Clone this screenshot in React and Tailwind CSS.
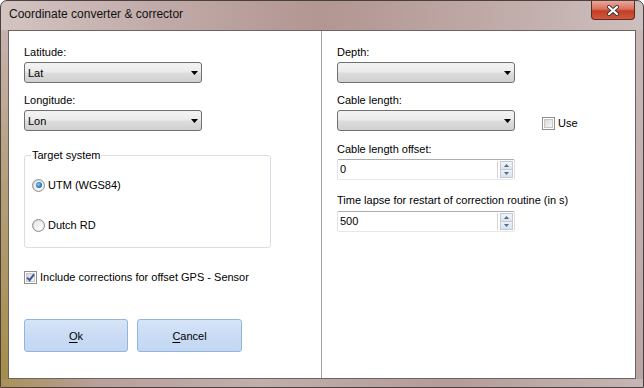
import React from 'react'

const font = "font-['Liberation_Sans','Segoe_UI',Arial,sans-serif]"

function Arrow() {
  return (
    <svg width="7" height="4" viewBox="0 0 7 4" className="shrink-0">
      <polygon points="0,0 7,0 3.5,4" fill="#000" />
    </svg>
  )
}

function Select({ value }) {
  return (
    <div className="flex h-[21px] w-[178px] items-center justify-between rounded-[3px] border border-[#707070] bg-[linear-gradient(180deg,#f3f3f3_0%,#ebebeb_48%,#dddddd_52%,#d0d0d0_100%)] pl-[3px] pr-[3px]">
      <span className="leading-[14px] text-black">{value}</span>
      <Arrow />
    </div>
  )
}

function SpinInput({ value }) {
  return (
    <div className="flex h-[21px] w-[178px] items-stretch rounded-[2px] border border-[#abadb3] border-b-[#e3e9ef] border-l-[#e2e3ea] border-r-[#dbdfe6] bg-white">
      <span className="flex-1 pl-[2px] leading-[19px] text-black">{value}</span>
      <div className="my-[1px] mr-[1px] flex w-[16px] border-l border-[#d4d4d4] pl-[2px]">
        <div className="flex w-[13px] flex-col">
          <div className="flex h-[9px] items-center justify-center border border-[#c3cad3] bg-[linear-gradient(180deg,#f2f5f8,#dde4ec)]">
            <svg width="5" height="3" viewBox="0 0 5 3">
              <polygon points="2.5,0 5,3 0,3" fill="#4e6a98" />
            </svg>
          </div>
          <div className="flex h-[9px] items-center justify-center border border-t-0 border-[#c3cad3] bg-[linear-gradient(180deg,#eef2f6,#dbe2ea)]">
            <svg width="5" height="3" viewBox="0 0 5 3">
              <polygon points="0,0 5,0 2.5,3" fill="#4e6a98" />
            </svg>
          </div>
        </div>
      </div>
    </div>
  )
}

function Radio({ checked }) {
  return (
    <div className="flex h-[13px] w-[13px] shrink-0 items-center justify-center rounded-full border border-[#8e8f8f] bg-[linear-gradient(135deg,#d2d2d2,#f6f6f6)]">
      <div className="flex h-[9px] w-[9px] items-center justify-center rounded-full bg-[linear-gradient(135deg,#e6e6e6,#ffffff)]">
        {checked && (
          <div className="h-[6px] w-[6px] rounded-full bg-[radial-gradient(circle_at_40%_40%,#8fd0f5_0%,#2b77c2_55%,#15508f_100%)]" />
        )}
      </div>
    </div>
  )
}

function Check({ checked }) {
  return (
    <div className="flex h-[13px] w-[13px] shrink-0 items-center justify-center border border-[#8e8f8f] bg-white">
      <div className="relative h-[9px] w-[9px] border border-[#c7c7c7] bg-[linear-gradient(135deg,#d9d9d9,#f7f7f7)]">
        {checked && (
          <svg width="11" height="11" viewBox="0 0 11 11" className="absolute -left-[2px] -top-[2px]">
            <path d="M2.2 5.6 L4.6 8.2 L9 2.4" stroke="#3d5a9e" strokeWidth="2" fill="none" />
          </svg>
        )}
      </div>
    </div>
  )
}

function Button({ first, rest, w }) {
  return (
    <button className={`h-[33px] ${w} rounded-[3px] border border-[#94b4dc] bg-[linear-gradient(180deg,#d6e5f8_0%,#cadcf4_50%,#c2d7f2_100%)] text-[11px] leading-[14px] text-black`}>
      <span className="underline underline-offset-[2px]">{first}</span>
      {rest}
    </button>
  )
}

export default function App() {
  return (
    <div className={`${font} flex h-[388px] w-[644px] flex-col overflow-hidden rounded-t-[7px] border border-[#4a4040] bg-[linear-gradient(90deg,#d3c4c2_0%,#c0aaa7_25%,#b29692_50%,#bea9a6_75%,#cdbfbe_100%)]`}>
      {/* title bar */}
      <div className="flex h-[29px] shrink-0 items-start justify-between">
        <div className="pl-[8px] pt-[6px] text-[12px] leading-[15px] text-[#111]">Coordinate converter &amp; corrector</div>
        <div className="mr-[8px] flex h-[19px] w-[44px] items-center justify-center rounded-b-[4px] border border-t-0 border-[#5b2a22] bg-[linear-gradient(180deg,#eba79a_0%,#d9705c_45%,#c23e26_55%,#d2583c_100%)]">
          <svg width="14" height="11" viewBox="0 0 14 11">
            <path d="M3 2 L11 9 M11 2 L3 9" stroke="#3a3a3a" strokeWidth="4" strokeLinecap="round" />
            <path d="M3 2 L11 9 M11 2 L3 9" stroke="#ffffff" strokeWidth="2.2" strokeLinecap="round" />
          </svg>
        </div>
      </div>

      <div className="flex h-[349px] shrink-0">
        <div className="w-[7px] bg-[linear-gradient(180deg,#c6b3ae_0%,#b6a07e_40%,#a48d48_100%)]" />

        {/* content */}
        <div className="flex w-[628px] border border-[#6e6262] bg-white text-[11px] text-black">
          {/* left column */}
          <div className="flex w-[312px] flex-col pl-[15px] pt-[14px]">
            <div className="leading-[14px]">Latitude:</div>
            <div className="mt-[3px]">
              <Select value="Lat" />
            </div>
            <div className="mt-[10px] leading-[14px]">Longitude:</div>
            <div className="mt-[3px]">
              <Select value="Lon" />
            </div>

            <fieldset className="mt-[17px] w-[247px] rounded-[3px] border border-[#d5dfe5] pb-[15px] pl-[7px]">
              <legend className="ml-[-1px] px-[1px] leading-[14px]">Target system</legend>
              <div className="mt-[16px] flex h-[14px] items-center gap-[3px]">
                <Radio checked />
                <span className="leading-[14px]">UTM (WGS84)</span>
              </div>
              <div className="mt-[26px] flex h-[14px] items-center gap-[3px]">
                <Radio />
                <span className="leading-[14px]">Dutch RD</span>
              </div>
            </fieldset>

            <div className="mt-[22px] flex h-[14px] items-center gap-[3px]">
              <Check checked />
              <span className="leading-[14px]">Include corrections for offset GPS - Sensor</span>
            </div>

            <div className="mt-[35px] flex gap-[9px]">
              <Button first="O" rest="k" w="w-[104px]" />
              <Button first="C" rest="ancel" w="w-[105px]" />
            </div>
          </div>

          <div className="w-px bg-[#a0a0a0]" />

          {/* right column */}
          <div className="flex flex-1 flex-col pl-[15px] pt-[14px]">
            <div className="leading-[14px]">Depth:</div>
            <div className="mt-[3px]">
              <Select value="" />
            </div>
            <div className="mt-[10px] leading-[14px]">Cable length:</div>
            <div className="mt-[3px] flex items-start">
              <Select value="" />
              <div className="ml-[27px] mt-[6px] flex h-[14px] items-center gap-[3px]">
                <Check />
                <span className="leading-[14px]">Use</span>
              </div>
            </div>
            <div className="mt-[11px] leading-[14px]">Cable length offset:</div>
            <div className="mt-[3px]">
              <SpinInput value="0" />
            </div>
            <div className="mt-[13px] leading-[14px]">Time lapse for restart of correction routine (in s)</div>
            <div className="mt-[4px]">
              <SpinInput value="500" />
            </div>
          </div>
        </div>

        <div className="w-[7px] bg-[linear-gradient(180deg,#c9b8b6,#bba5a2)]" />
      </div>

      <div className="h-[8px] shrink-0 bg-[linear-gradient(90deg,#a89258_0%,#b9a09a_15%,#c2aeab_40%,#b49c98_70%,#c7b6b4_100%)]" />
    </div>
  )
}
